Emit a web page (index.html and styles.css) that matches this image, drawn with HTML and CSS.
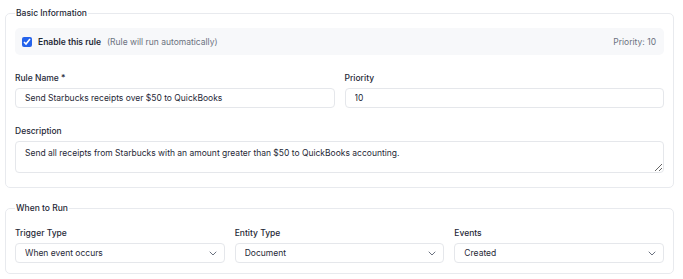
FILE: index.html
```html
<!DOCTYPE html>
<html>
<head>
<meta charset="utf-8">
<link rel="stylesheet" href="styles.css">
</head>
<body>
<div class="page">
  <fieldset class="section basic">
    <legend>Basic Information</legend>
    <div class="enable-row">
      <label class="enable">
        <input type="checkbox" checked>
        <span class="enable-title">Enable this rule</span>
        <span class="enable-hint">(Rule will run automatically)</span>
      </label>
      <span class="priority-note">Priority: 10</span>
    </div>
    <div class="grid two">
      <div class="field">
        <label class="lbl">Rule Name *</label>
        <input class="ctrl" type="text" value="Send Starbucks receipts over $50 to QuickBooks">
      </div>
      <div class="field">
        <label class="lbl">Priority</label>
        <input class="ctrl" type="text" value="10">
      </div>
    </div>
    <div class="field">
      <label class="lbl">Description</label>
      <textarea class="ctrl area">Send all receipts from Starbucks with an amount greater than $50 to QuickBooks accounting.</textarea>
    </div>
  </fieldset>

  <fieldset class="section run">
    <legend>When to Run</legend>
    <div class="grid three">
      <div class="field">
        <label class="lbl">Trigger Type</label>
        <select class="ctrl sel"><option>When event occurs</option></select>
      </div>
      <div class="field">
        <label class="lbl">Entity Type</label>
        <select class="ctrl sel"><option>Document</option></select>
      </div>
      <div class="field">
        <label class="lbl">Events</label>
        <select class="ctrl sel"><option>Created</option></select>
      </div>
    </div>
  </fieldset>
</div>
</body>
</html>
```

FILE: styles.css
```css
* { box-sizing: border-box; }
html, body { margin: 0; padding: 0; background: #fff; }
body {
  font-family: Inter, "Liberation Sans", sans-serif;
  font-size: 8.5px;
  color: #1f2937;
}
.page {
  padding: 8px 9px 0 5px;
  display: flex;
  flex-direction: column;
  gap: 15px;
}
.section {
  margin: 0;
  border: 1px solid #e8eaee;
  border-radius: 5px;
  padding: 9px 9px 14px 9px;
  display: flex;
  flex-direction: column;
  gap: 18px;
  min-width: 0;
}
.section legend {
  padding: 0 1px;
  font-size: 8.5px;
  line-height: 11px;
  font-weight: 500;
  color: #1f2937;
}
.run { padding-top: 14px; padding-bottom: 10px; }
.enable-row {
  background: #f7f8fa;
  border-radius: 5px;
  height: 27px;
  display: flex;
  align-items: center;
  justify-content: space-between;
  padding: 0 8px 0 7px;
}
.enable {
  display: flex;
  align-items: center;
  gap: 5px;
}
.enable input {
  margin: 0 1px 0 0;
  width: 10px;
  height: 10px;
  accent-color: #2563eb;
}
.enable-title { font-weight: 600; color: #1f2937; }
.enable-hint { color: #6b7280; margin-left: 1px; }
.priority-note { color: #6b7280; }
.grid { display: grid; }
.grid.two { grid-template-columns: 1fr 1fr; column-gap: 10px; }
.grid.three { grid-template-columns: 1fr 1fr 1fr; column-gap: 10px; }
.field { display: flex; flex-direction: column; gap: 4px; min-width: 0; }
.lbl { font-weight: 500; line-height: 11px; color: #1f2937; }
.ctrl {
  font-family: inherit;
  font-size: 8.5px;
  color: #1f2937;
  border: 1px solid #e5e7eb;
  border-radius: 4px;
  height: 20px;
  padding: 0 9px;
  background: #fff;
  width: 100%;
  margin: 0;
  outline: none;
}
.area {
  height: 32px;
  padding: 6px 9px;
  resize: vertical;
  display: block;
  line-height: 11px;
}
.sel {
  appearance: none;
  -webkit-appearance: none;
  background-image: url("data:image/svg+xml;utf8,<svg xmlns='http://www.w3.org/2000/svg' width='8' height='5' viewBox='0 0 8 5'><path d='M1 1l3 3 3-3' fill='none' stroke='%236b7280' stroke-width='1' stroke-linecap='round' stroke-linejoin='round'/></svg>");
  background-repeat: no-repeat;
  background-position: right 7px center;
  padding-right: 20px;
}
```
